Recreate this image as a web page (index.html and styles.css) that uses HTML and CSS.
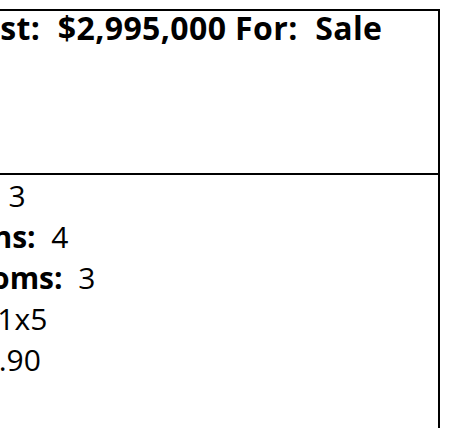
FILE: index.html
```html
<!DOCTYPE html>
<html lang="en">
<head>
<meta charset="utf-8">
<title>Listing</title>
<link rel="stylesheet" href="styles.css">
</head>
<body>
<table class="listing">
  <thead>
    <tr>
      <th class="listing-head">List:&nbsp; $2,995,000 For:&nbsp; Sale</th>
    </tr>
  </thead>
  <tbody>
    <tr><td class="field"><b>Acres:</b>&nbsp; 3</td></tr>
    <tr><td class="field"><b>Sections:</b>&nbsp; 4</td></tr>
    <tr><td class="field"><b>Bedrooms:</b>&nbsp; 3</td></tr>
    <tr><td class="field"><b>Type:</b>&nbsp; 1x5</td></tr>
    <tr><td class="field"><b>Age:</b>&nbsp; 0.90</td></tr>
    <tr><td class="filler"></td></tr>
  </tbody>
</table>
</body>
</html>
```
FILE: styles.css
```css
html, body {
  margin: 0;
  padding: 0;
  background: #ffffff;
}

body {
  font-family: "Open Sans", "Noto Sans", sans-serif;
  color: #000000;
}

.listing {
  margin: 9px 0 0 -101px;
  width: 541px;
  border: 2px solid #000000;
  border-spacing: 0;
}

.listing-head {
  height: 162px;
  padding: 0 1px 0 16px;
  vertical-align: top;
  text-align: center;
  font-size: 32px;
  font-weight: 700;
  line-height: 34px;
  letter-spacing: 0.4px;
  white-space: nowrap;
  border-bottom: 2px solid #000000;
}

.field {
  padding: 0 1px;
  font-size: 30px;
  line-height: normal;
  text-align: left;
  white-space: nowrap;
}

.field b {
  font-weight: 700;
}

.filler {
  height: 120px;
  padding: 0;
}
```
